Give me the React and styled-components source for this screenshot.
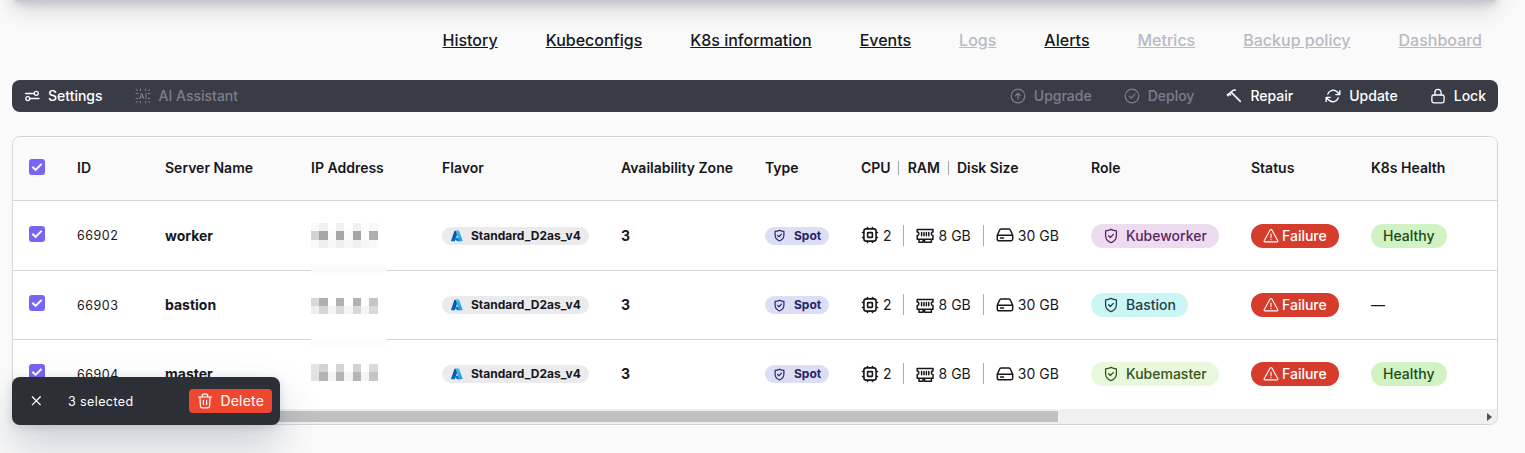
import React from "react";
import styled, { createGlobalStyle } from "styled-components";

const Global = createGlobalStyle`
  * { box-sizing: border-box; }
  body {
    margin: 0;
    background: #fafafa;
    color: #17171c;
    font-family: Inter, "Liberation Sans", sans-serif;
    font-size: 14px;
    overflow: hidden;
  }
  svg { display: block; flex: none; overflow: visible; }
`;

const Page = styled.div`
  display: flow-root;
  height: 453px;
  padding: 0 27px 0 12px;
  overflow: hidden;
`;

const CardEdge = styled.div`
  height: 80px;
  margin: -78px 2px 0;
  border-radius: 4px;
  background: #c9c9d3;
  box-shadow: 0 2px 8px rgba(60, 60, 80, 0.16), 0 6px 24px rgba(60, 60, 80, 0.22);
`;

const Nav = styled.nav`
  display: flex;
  justify-content: flex-end;
  gap: 48px;
  height: 78px;
  padding: 26px 16px 0 0;
  line-height: 24px;
  font-size: 16px;
  font-weight: 500;
`;

const NavLink = styled.a`
  height: 24px;
  color: ${(p) => (p.$off ? "#b9b9c6" : "#17171c")};
  text-decoration: underline;
`;

const Toolbar = styled.div`
  display: flex;
  justify-content: space-between;
  height: 32px;
  padding: 0 12px;
  border-radius: 8px;
  background: #3a3c45;
`;

const ToolGroup = styled.div`
  display: flex;
  align-items: center;
  gap: 32px;
`;

const Tool = styled.button`
  display: flex;
  align-items: center;
  gap: 8px;
  padding: 0;
  border: 0;
  background: none;
  font: 500 14px/20px Inter, "Liberation Sans", sans-serif;
  color: ${(p) => (p.$off ? "#7c7e8c" : "#fff")};
`;

const Table = styled.section`
  margin-top: 24px;
  height: 289px;
  border: 1px solid #d4d4dc;
  border-radius: 8px;
  background: #fff;
  overflow: hidden;
`;

const Row = styled.div`
  display: grid;
  grid-template-columns: 48px 88px 146px 131px 179px 144px 96px 230px 160px 120px 1fr;
  align-items: center;
  height: ${(p) => p.$height}px;
  padding-left: 16px;
  padding-bottom: ${(p) => (p.$last ? 1 : 0)}px;
  border-bottom: ${(p) => (p.$last ? "0" : "1px solid #d4d4dc")};
`;

const HeadRow = styled(Row)`
  padding-bottom: 1px;
  background: #fafafa;
  font-weight: 600;
  line-height: 20px;
`;

const Check = styled.div`
  width: 16px;
  height: 16px;
  margin-bottom: ${(p) => p.$lift}px;
  border-radius: 3px;
  background: #7765f5;
`;

const Id = styled.span`
  font-size: 12.5px;
  letter-spacing: 0.5px;
`;

const Strong = styled.span`
  font-weight: 700;
  margin-bottom: 1px;
`;

const Dash = styled.span`
  margin-bottom: 1px;
  font-weight: 500;
`;

const Mosaic = styled.div`
  position: relative;
  display: grid;
  grid-template-columns: 8px 9px 8px 8px 9px 8px 8px 9px;
  align-self: start;
  margin-top: ${(p) => p.$top}px;
`;

const Pixel = styled.i`
  height: ${(p) => p.$h}px;
  background: ${(p) => p.$c};
`;

const MosaicBand = styled.i`
  position: absolute;
  left: 0;
  top: ${(p) => p.$top}px;
  width: 75px;
  height: 8px;
  background: #fafcfb;
`;

const Badge = styled.span`
  display: inline-flex;
  align-items: center;
  justify-self: start;
  gap: ${(p) => p.$gap ?? (p.$small ? 8 : 7)}px;
  height: ${(p) => (p.$small ? 18 : 24)}px;
  padding: 0 ${(p) => (p.$small ? 8 : 12)}px;
  border-radius: 12px;
  background: ${(p) => p.$bg};
  color: ${(p) => p.$fg};
  font-size: ${(p) => (p.$small ? 12 : 14)}px;
  font-weight: ${(p) => (p.$small ? 700 : 500)};
  line-height: 18px;
`;

const Specs = styled.div`
  display: flex;
  align-items: center;
  margin-bottom: 1px;
`;

const HeadSpecs = styled(Specs)`
  margin-bottom: 0;
`;

const Spec = styled.span`
  display: flex;
  align-items: center;
  gap: 4px;
`;

const Rule = styled.i`
  width: 1px;
  height: ${(p) => p.$h}px;
  margin: 0 ${(p) => p.$right ?? p.$gap}px 0 ${(p) => p.$gap}px;
  background: #a9a9b5;
`;

const ScrollTrack = styled.div`
  display: flex;
  justify-content: space-between;
  align-items: center;
  height: 15px;
  padding-right: 5px;
  background: #f0f0f0;
`;

const ScrollThumb = styled.div`
  width: 1045px;
  height: 11px;
  background: #c1c1c1;
`;

const SelectionBar = styled.div`
  position: absolute;
  left: 12px;
  top: 377px;
  display: flex;
  align-items: center;
  width: 268px;
  height: 48px;
  padding: 0 8px 0 16px;
  border-radius: 8px;
  background: #2d2f37;
  color: #fff;
  box-shadow: 0 2px 8px rgba(50, 65, 90, 0.16), 0 20px 40px rgba(50, 70, 100, 0.24);
`;

const SelectionText = styled.span`
  flex: 1;
  margin-left: 24px;
  font-size: 12.5px;
  letter-spacing: 0.4px;
`;

const DeleteButton = styled.button`
  display: flex;
  align-items: center;
  gap: 7px;
  height: 24px;
  padding: 0 8px;
  border: 0;
  border-radius: 4px;
  background: #ed4730;
  color: #fff;
  font: 400 14px/20px Inter, "Liberation Sans", sans-serif;
  letter-spacing: 0.2px;
`;

const Icon = ({ size = 16, box = 16, sw = 1.2, children }) => (
  <svg width={size} height={size} viewBox={`0 0 ${box} ${box}`} fill="none" stroke="currentColor"
    strokeWidth={sw} strokeLinecap="round" strokeLinejoin="round">{children}</svg>
);

const SettingsIcon = () => (
  <Icon sw={1.3}><path d="M1.5 5.5H10M6.5 10.5H15" /><circle cx="12.3" cy="5.3" r="2" /><circle cx="3.8" cy="10.6" r="2" /></Icon>
);
const AiIcon = () => (
  <Icon sw={1}>
    <path d="M5.5 1v1.5M10.5 1v1.5M5.5 13.5V15M10.5 13.5V15M1 5.5h2M13 5.5h2M1 10.5h2M13 10.5h2M1.2 1.2l1.6 1.6M14.8 1.2l-1.6 1.6M1.2 14.8l1.6-1.6M14.8 14.8l-1.6-1.6" />
    <path d="M4.7 10.5 6.7 5.5l2 5M5.4 9h2.6M11 5.5v5" />
  </Icon>
);
const UpgradeIcon = () => (
  <Icon><circle cx="8" cy="8" r="6.8" /><path d="M8 11V5.2M5.6 7.6 8 5.2l2.4 2.4" /></Icon>
);
const DeployIcon = () => (
  <Icon><circle cx="8" cy="8" r="6.8" /><path d="m5.2 8.2 2 2 3.8-4" /></Icon>
);
const HammerIcon = () => (
  <Icon sw={1.5}><path d="M1.3 6.8C3.2 6 4.6 4.8 6 3.2 6.8 2.4 8 2 9.3 2.1M1.3 6.8l1 .9M3.2 5.6l1.3 1.3M5.6 4.6l8.7 8.8" /></Icon>
);
const UpdateIcon = () => (
  <Icon sw={1.4}><path d="M14.8 2.6v4h-4M1.2 13.4v-4h4M2.8 6a5.7 5.7 0 0 1 9.4-2.1l2.6 2.7M1.2 9.4l2.6 2.7A5.7 5.7 0 0 0 13.2 10" /></Icon>
);
const LockIcon = () => (
  <Icon sw={1.3}><rect x="1.9" y="7" width="12.2" height="7.8" rx="1.8" /><path d="M4.9 7V4.4a3.1 3.1 0 0 1 6.2 0V7" /></Icon>
);
const ShieldIcon = ({ size = 16 }) => (
  <Icon size={size} sw={size < 16 ? 1.45 : 1.3}>
    <path d="M8 1.4c1.7 1 3.4 1.4 5.4 1.4v5c0 3.4-2.1 5.7-5.4 6.9-3.3-1.2-5.4-3.5-5.4-6.9v-5c2 0 3.7-.4 5.4-1.4Z" />
    <path d="m5.6 7.8 1.7 1.7 3.1-3.1" />
  </Icon>
);
const WarningIcon = () => (
  <Icon sw={1.1}><path d="M7.1 2.1 1.2 12.7c-.3.6 0 1.2.7 1.2h12.2c.7 0 1-.6.7-1.2L8.9 2.1c-.4-.7-1.4-.7-1.8 0ZM8 6v3.6M8 11.4v.3" /></Icon>
);
const CpuIcon = () => (
  <Icon size={18} box={18} sw={1.6}>
    <rect x="2.9" y="2.9" width="12.2" height="12.2" rx="2.4" /><rect x="6.6" y="6.6" width="4.8" height="4.8" rx=".6" />
    <path d="M6.5 1.5v1M11.5 1.5v1M6.5 15.5v1M11.5 15.5v1M1.5 6.5h1M1.5 11.5h1M15.5 6.5h1M15.5 11.5h1" />
  </Icon>
);
const RamIcon = () => (
  <Icon size={18} box={18} sw={1.5}>
    <path d="M.2 3.6h15.8V6a1.7 1.7 0 0 0 0 3.4v3.9H.2V9.4A1.7 1.7 0 0 0 .2 6ZM4.6 6.6v3.2M7 6.6v3.2M9.4 6.6v3.2M11.8 6.6v3.2M2 13.3v2.9h4v-1.6h1.6v1.6h6.8v-2.9" />
  </Icon>
);
const DiskIcon = () => (
  <Icon size={18} box={18} sw={1.5}>
    <path d="M1.3 9.3 3.5 4.2c.3-.8.8-1.2 1.6-1.2h7.8c.8 0 1.3.4 1.6 1.2l2.2 5.1v3.8c0 1.1-.7 1.7-1.7 1.7H3c-1 0-1.7-.6-1.7-1.7ZM1.5 9.2h15M4.5 12h3" />
  </Icon>
);
const AzureIcon = () => (
  <svg width="13" height="12" viewBox="0 0 13 12">
    <defs>
      <linearGradient id="azl" x1="0" y1="0" x2="0" y2="1"><stop stopColor="#114a8b" /><stop offset="1" stopColor="#0669bc" /></linearGradient>
      <linearGradient id="azr" x1="0" y1="0" x2="1" y2="1"><stop stopColor="#3ccbf4" /><stop offset="1" stopColor="#2892df" /></linearGradient>
    </defs>
    <g transform="translate(.8 0)">
      <path d="M4.2.7h3.4L4.1 10.9c-.1.3-.3.4-.6.4H.9c-.5 0-.7-.4-.6-.8L3.6 1.1c.1-.3.3-.4.6-.4Z" fill="url(#azl)" />
      <path d="M9.2 7.7H4l-.4 1 2.9 2.5h3.1Z" fill="#0078d4" />
      <path d="M4.3.7h3.5c.3 0 .5.2.6.4l3.3 9.4c.1.4-.1.8-.6.8H7.4c.5 0 .8-.4.6-.8L4.8 1.1C4.7.9 4.6.7 4.3.7Z" fill="url(#azr)" />
    </g>
  </svg>
);
const TrashIcon = () => (
  <Icon sw={1.2}><path d="M1.4 4h13.2M5.3 4V2.3c0-.7.4-1.1 1.1-1.1h3.2c.7 0 1.1.4 1.1 1.1V4M2.9 4l.5 9.2c.1 1 .6 1.6 1.6 1.6h6c1 0 1.5-.6 1.6-1.6l.5-9.2M6.4 7.3v4.2M9.6 7.3v4.2" /></Icon>
);

const Checkbox = ({ lift }) => (
  <Check $lift={lift}>
    <svg width="16" height="16" viewBox="0 0 16 16" fill="none" stroke="#fff" strokeWidth="2"><path d="m3.4 7.7 3.2 3.2 6-6" /></svg>
  </Check>
);

const links = [
  ["History"], ["Kubeconfigs"], ["K8s information"], ["Events"], ["Logs", true],
  ["Alerts"], ["Metrics", true], ["Backup policy", true], ["Dashboard", true],
];

const W = "#fff";
const rows = [
  {
    id: "66902", name: "worker", role: "Kubeworker", bg: "#eddcf0", fg: "#592663", healthy: true, height: 70, lift: 3, top: 22, band: 42,
    pixels: [
      ["#fafafa", "#f0f1f1", W, "#f0f1f1", W, "#f0f1f1", W, "#f7f8f8"],
      ["#d3d3d4", "#a4a5a8", "#fafbfb", "#a4a5a8", "#fcfbfc", "#a4a5aa", "#fcfdfc", "#b0b0b2"],
      ["#fafafa", "#eeefef", "#f7f9f9", "#eeefef", "#f6f6f6", "#eeefef", "#f6f6f6", "#f9f9f9"],
    ],
    heights: [8, 9, 8],
  },
  {
    id: "66903", name: "bastion", role: "Bastion", bg: "#ccf6f6", fg: "#1c4145", healthy: false, height: 69, lift: 4, top: 27, band: 41,
    pixels: [
      ["#d9d9da", "#b0b0b2", W, "#b2b2b4", W, "#b0b0b6", W, "#c5c5c7"],
      ["#eeeeee", "#d5d6d6", "#f3f5f4", "#d9dada", "#f5f5f5", "#d8d8da", "#f5f5f5", "#d9d9da"],
    ],
    heights: [8, 8],
  },
  {
    id: "66904", name: "master", role: "Kubemaster", bg: "#e8f8dc", fg: "#355619", healthy: true, height: 69, lift: 4, top: 24,
    pixels: [
      ["#e3e3e4", "#d2d3d4", W, "#d5d5d7", W, "#d3d3d5", W, "#d9d9da"],
      ["#e3e3e4", "#b2b3b5", "#f3f5f4", "#b4b4b6", "#f4f5f5", "#b4b4b7", "#f5f5f5", "#c5c5c7"],
    ],
    heights: [8, 9],
  },
];

export default function App() {
  return (
    <Page>
      <Global />
      <CardEdge />
      <Nav>{links.map(([t, off]) => <NavLink key={t} $off={off}>{t}</NavLink>)}</Nav>
      <Toolbar>
        <ToolGroup>
          <Tool><SettingsIcon />Settings</Tool>
          <Tool $off><AiIcon />AI Assistant</Tool>
        </ToolGroup>
        <ToolGroup>
          <Tool $off><UpgradeIcon />Upgrade</Tool>
          <Tool $off><DeployIcon />Deploy</Tool>
          <Tool><HammerIcon />Repair</Tool>
          <Tool><UpdateIcon />Update</Tool>
          <Tool><LockIcon />Lock</Tool>
        </ToolGroup>
      </Toolbar>
      <Table>
        <HeadRow $height={64}>
          <Checkbox lift={2} />
          <span>ID</span><span>Server Name</span><span>IP Address</span><span>Flavor</span>
          <span>Availability Zone</span><span>Type</span>
          <HeadSpecs>CPU<Rule $h={14} $gap={7} $right={9} />RAM<Rule $h={14} $gap={8} />Disk Size</HeadSpecs>
          <span>Role</span><span>Status</span><span>K8s Health</span>
        </HeadRow>
        {rows.map((r, i) => (
          <Row key={r.id} $height={r.height} $last={i === 2}>
            <Checkbox lift={r.lift} />
            <Id>{r.id}</Id>
            <Strong>{r.name}</Strong>
            <Mosaic $top={r.top}>
              {r.pixels.flatMap((line, y) => line.map((c, x) => (
                <Pixel key={`${y}-${x}`} $c={c} $h={r.heights[y]} />
              )))}
              {r.band && <MosaicBand $top={r.band} />}
            </Mosaic>
            <Badge $small $bg="#ebebee" $fg="#17171c"><AzureIcon />Standard_D2as_v4</Badge>
            <Strong>3</Strong>
            <Badge $small $bg="#dbdef5" $fg="#272566"><ShieldIcon size={13} />Spot</Badge>
            <Specs>
              <Spec><CpuIcon />2</Spec><Rule $h={21} $gap={11} $right={13} />
              <Spec><RamIcon />8 GB</Spec><Rule $h={21} $gap={12} />
              <Spec><DiskIcon />30 GB</Spec>
            </Specs>
            <Badge $bg={r.bg} $fg={r.fg}><ShieldIcon />{r.role}</Badge>
            <Badge $gap={3} $bg="#d63c2c" $fg="#fff"><WarningIcon />Failure</Badge>
            {r.healthy ? <Badge $bg="#d1f3c4" $fg="#1d4a19">Healthy</Badge> : <Dash>—</Dash>}
          </Row>
        ))}
        <ScrollTrack>
          <ScrollThumb />
          <svg width="5" height="8" viewBox="0 0 5 8"><path d="M0 0 5 4 0 8Z" fill="#505050" /></svg>
        </ScrollTrack>
      </Table>
      <SelectionBar>
        <svg width="16" height="16" viewBox="0 0 16 16" stroke="#fff" strokeWidth="1.3"><path d="m4 3.5 8.6 8.6M12.6 3.5 4 12.1" /></svg>
        <SelectionText>3 selected</SelectionText>
        <DeleteButton><TrashIcon />Delete</DeleteButton>
      </SelectionBar>
    </Page>
  );
}
